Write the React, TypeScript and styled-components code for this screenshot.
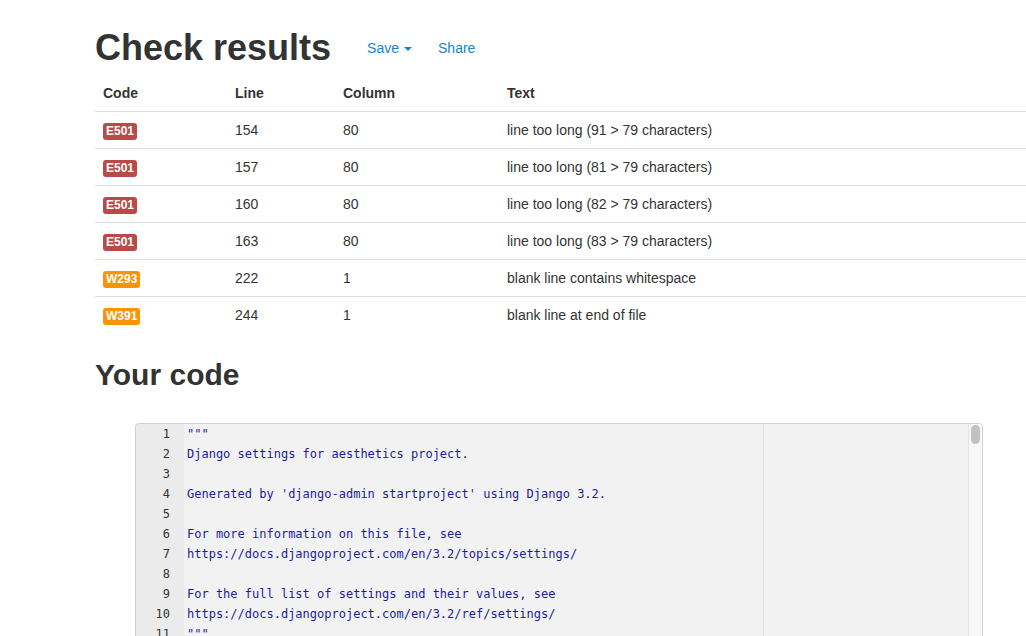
import React from 'react'
import styled, { createGlobalStyle } from 'styled-components'

const GlobalStyle = createGlobalStyle`
  html, body {
    margin: 0;
    padding: 0;
    background: #fff;
    overflow: hidden;
  }
  body {
    font-family: 'Liberation Sans', Helvetica, Arial, sans-serif;
    font-size: 14px;
    line-height: 20px;
    color: #333;
  }
`

const Page = styled.div`
  width: 1200px;
  padding-left: 95px;
  box-sizing: border-box;
`

const TitleRow = styled.div`
  display: flex;
  align-items: center;
  margin-top: 28px;
  height: 40px;
`

const Title = styled.h1`
  margin: 0;
  font-size: 36px;
  line-height: 40px;
  font-weight: bold;
  color: #333;
`

const ActionLink = styled.a<{ $first?: boolean }>`
  display: inline-flex;
  align-items: center;
  margin-left: ${({ $first }) => ($first ? '36px' : '26px')};
  color: #1a83cc;
  font-size: 14px;
  text-decoration: none;
  cursor: pointer;
`

const Caret = styled.span`
  display: inline-block;
  width: 0;
  height: 0;
  margin-left: 5px;
  margin-top: 1px;
  border-top: 4px solid #1a83cc;
  border-left: 4px solid transparent;
  border-right: 4px solid transparent;
`

const Table = styled.table`
  width: 100%;
  margin-top: 7px;
  border-collapse: collapse;
  border-spacing: 0;
`

const Th = styled.th<{ $width?: number }>`
  width: ${({ $width }) => ($width ? `${$width}px` : 'auto')};
  padding: 8px;
  text-align: left;
  font-weight: bold;
  line-height: 20px;
  vertical-align: bottom;
  box-sizing: border-box;
`

const Td = styled.td`
  padding: 8px;
  line-height: 20px;
  border-top: 1px solid #ddd;
  vertical-align: top;
`

const Badge = styled.span<{ $level: 'error' | 'warning' }>`
  display: inline-block;
  padding: 2px 3px;
  font-size: 12px;
  font-weight: bold;
  line-height: 13px;
  color: #fff;
  border-radius: 3px;
  vertical-align: 0;
  background: ${({ $level }) => ($level === 'error' ? '#b94a48' : '#f89406')};
`

const SubTitle = styled.h2`
  margin: 25px 0 0;
  font-size: 30px;
  line-height: 33px;
  font-weight: bold;
  color: #333;
`

const Editor = styled.div`
  display: flex;
  width: 848px;
  height: 260px;
  margin: 32px 0 0 40px;
  border: 1px solid #cfcfcf;
  border-radius: 4px;
  overflow: hidden;
  box-sizing: border-box;
  font-family: 'DejaVu Sans Mono', Menlo, Monaco, monospace;
  font-size: 12px;
  line-height: 20px;
`

const Gutter = styled.div`
  width: 48px;
  flex-shrink: 0;
  background: #ebebeb;
  color: #333;
  text-align: right;
  padding-right: 14px;
  box-sizing: border-box;
`

const Content = styled.div`
  position: relative;
  flex: 1;
  background: #f2f2f2;
  padding-left: 3px;
  color: #1a1aa6;
  white-space: pre;
`

const PrintMargin = styled.div`
  position: absolute;
  top: 0;
  bottom: 0;
  left: 579px;
  width: 1px;
  background: #e3e3e3;
`

const Line = styled.div`
  height: 20px;
`

const Keyword = styled.span`
  color: #0000ff;
`

const Plain = styled.span`
  color: #000;
`

const Scrollbar = styled.div`
  width: 14px;
  flex-shrink: 0;
  background: #f8f8f8;
  border-left: 1px solid #e4e4e4;
  padding: 1px 0 0 2px;
  box-sizing: border-box;
`

const Thumb = styled.div`
  width: 9px;
  height: 19px;
  border-radius: 5px;
  background: #c1c1c1;
`

type Issue = {
  code: string
  line: number
  column: number
  text: string
}

const ISSUES: Issue[] = [
  { code: 'E501', line: 154, column: 80, text: 'line too long (91 > 79 characters)' },
  { code: 'E501', line: 157, column: 80, text: 'line too long (81 > 79 characters)' },
  { code: 'E501', line: 160, column: 80, text: 'line too long (82 > 79 characters)' },
  { code: 'E501', line: 163, column: 80, text: 'line too long (83 > 79 characters)' },
  { code: 'W293', line: 222, column: 1, text: 'blank line contains whitespace' },
  { code: 'W391', line: 244, column: 1, text: 'blank line at end of file' },
]

const DOC_LINES = [
  '"""',
  'Django settings for aesthetics project.',
  '',
  "Generated by 'django-admin startproject' using Django 3.2.",
  '',
  'For more information on this file, see',
  'https://docs.djangoproject.com/en/3.2/topics/settings/',
  '',
  'For the full list of settings and their values, see',
  'https://docs.djangoproject.com/en/3.2/ref/settings/',
  '"""',
]

export default function App() {
  const total = DOC_LINES.length + 3

  return (
    <>
      <GlobalStyle />
      <Page>
        <TitleRow>
          <Title>Check results</Title>
          <ActionLink $first>
            Save
            <Caret />
          </ActionLink>
          <ActionLink>Share</ActionLink>
        </TitleRow>

        <Table>
          <thead>
            <tr>
              <Th $width={132}>Code</Th>
              <Th $width={108}>Line</Th>
              <Th $width={164}>Column</Th>
              <Th>Text</Th>
            </tr>
          </thead>
          <tbody>
            {ISSUES.map((issue, i) => (
              <tr key={i}>
                <Td>
                  <Badge $level={issue.code.startsWith('E') ? 'error' : 'warning'}>{issue.code}</Badge>
                </Td>
                <Td>{issue.line}</Td>
                <Td>{issue.column}</Td>
                <Td>{issue.text}</Td>
              </tr>
            ))}
          </tbody>
        </Table>

        <SubTitle>Your code</SubTitle>

        <Editor>
          <Gutter>
            {Array.from({ length: total }, (_, i) => (
              <Line key={i}>{i + 1}</Line>
            ))}
          </Gutter>
          <Content>
            <PrintMargin />
            {DOC_LINES.map((text, i) => (
              <Line key={i}>{text}</Line>
            ))}
            <Line />
            <Line>
              <Keyword>from</Keyword>
              <Plain> pathlib </Plain>
              <Keyword>import</Keyword>
              <Plain> Path</Plain>
            </Line>
            <Line>
              <Keyword>import</Keyword>
              <Plain> os</Plain>
            </Line>
          </Content>
          <Scrollbar>
            <Thumb />
          </Scrollbar>
        </Editor>
      </Page>
    </>
  )
}
